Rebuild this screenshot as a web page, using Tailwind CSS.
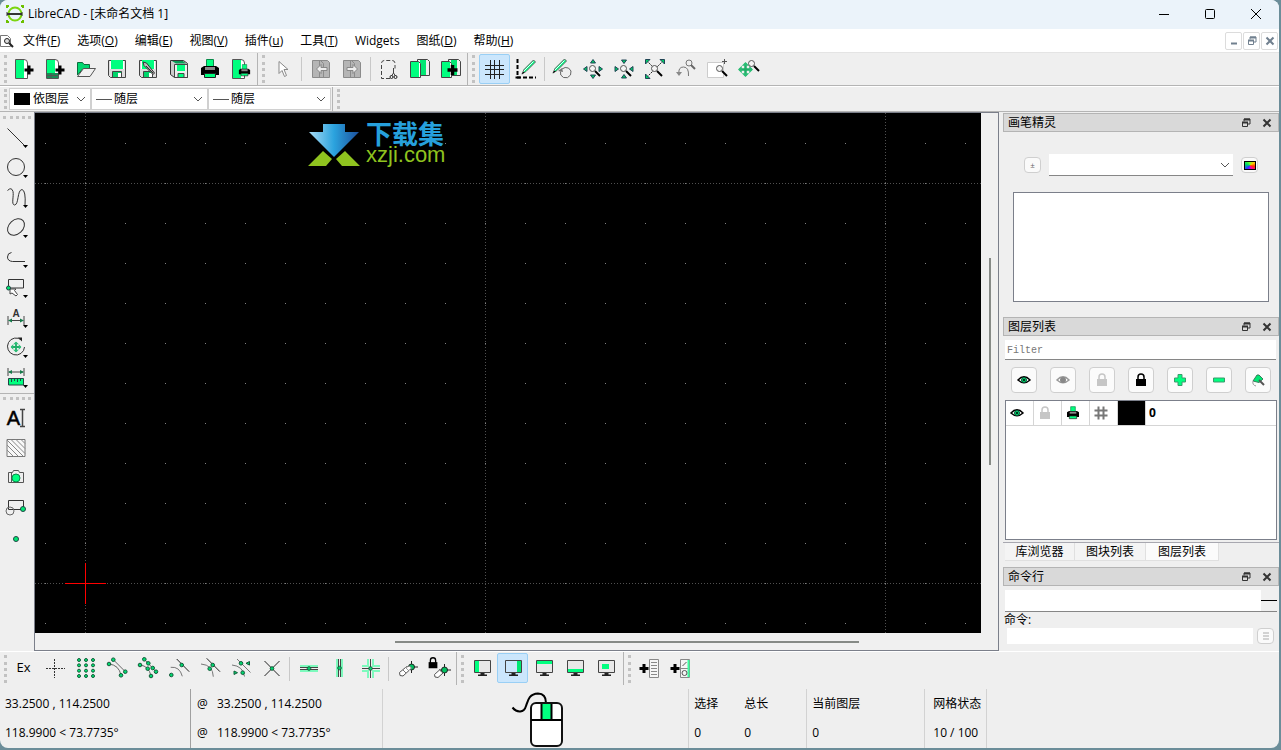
<!DOCTYPE html>
<html lang="zh">
<head>
    <meta charset="UTF-8">
    <meta name="viewport" content="width=device-width, initial-scale=1.0">
    <title>LibreCAD - [未命名文档 1]</title>
    <script src="https://cdn.jsdelivr.net/npm/@tailwindcss/browser@4"></script>
</head>
<body class="h-screen overflow-hidden bg-[#6b8d99] font-['Open_Sans','Noto_Sans_CJK_SC',sans-serif] text-xs text-black">

    <!-- 公用图标 -->
    <svg class="hidden" aria-hidden="true">
        <symbol id="page" viewBox="0 0 24 24"><path d="M3.500 2.500h8.500q3.500 0 3.500 3.500v15.500h-12z" fill="#fff" stroke="#555"/><path d="M4 3h8v18H4z" fill="#00ff7f"/></symbol>
        <symbol id="plus" viewBox="0 0 24 24"><path d="M17 8.500v9M12.500 13h9" stroke="#000" stroke-width="3"/></symbol>
        <symbol id="floppy" viewBox="0 0 24 24"><path d="M3.500 3.500h17v17h-15l-2-2z" fill="#ddd" stroke="#444"/><path d="M6 3h12v9H6z" fill="#00ff7f"/><path d="M5.500 4v8M18.500 4v8" fill="none" stroke="#fff"/><path d="M7.500 14.500h9v6h-9z" fill="#00d66b" stroke="#444"/><path d="M13 16h3v4h-3z" fill="#fff"/></symbol>
        <symbol id="printer" viewBox="0 0 24 24"><path d="M8.500 2.500h7v8h-7z" fill="#00ff7f" stroke="#0a8a4a"/><path d="M3 11l3-2h12l3 2v7H3z" fill="#000"/><path d="M7 10h10v3H7z" fill="#888"/><path d="M6.500 16.500h11v4h-11z" fill="#00ff7f" stroke="#222"/></symbol>
        <symbol id="mag" viewBox="0 0 24 24"><path d="M14 14l5 5" stroke="#000" stroke-width="2"/><circle cx="11.500" cy="11.500" r="3" fill="#f4f4f4" stroke="#555"/></symbol>
        <symbol id="eye" viewBox="0 0 16 16"><path d="M2 8q6-6.500 12 0q-6 5.500-12 0z" fill="#fff" stroke="currentColor" stroke-width="1.500"/></symbol>
        <symbol id="lock" viewBox="0 0 16 16"><path d="M5 8V5q0-3 3-3t3 3v3" fill="none" stroke="currentColor" stroke-width="1.500"/><path d="M3 7h10v7H3z" fill="currentColor"/></symbol>
        <symbol id="float" viewBox="0 0 10 10"><path d="M3 3.500V1h6v5H7" fill="none" stroke="currentColor"/><path d="M3 1.500h6" stroke="currentColor" stroke-width="2"/><path d="M1.500 4.500h5v4h-5z" fill="none" stroke="currentColor"/><path d="M1 4.500h6" stroke="currentColor" stroke-width="2"/></symbol>
        <symbol id="cross" viewBox="0 0 10 10"><path d="M1.500 1.500l7 7M8.500 1.500l-7 7" stroke="currentColor" stroke-width="2"/></symbol>
        <symbol id="chev" viewBox="0 0 10 10"><path d="M1 3l4 4 4-4" fill="none" stroke="#555"/></symbol>
        <symbol id="drop" viewBox="0 0 24 24"><path d="M19 20h5l-2.500 3z" fill="#000"/></symbol>
        <symbol id="screen" viewBox="0 0 24 24"><path d="M4.500 4.500h16v12h-16z" fill="#e8e8e8" stroke="#444"/><path d="M10.500 17h4v2h-4zM8 18.500h9v1.500H8z" fill="#222"/></symbol>
        <symbol id="move" viewBox="0 0 12 12"><path d="M6 1v10M1 6h10" stroke="#1fae68" stroke-width="2"/><path d="M6 0l3 3H3zM6 12l3-3H3zM0 6l3-3v6zM12 6L9 3v6z" fill="#2bbd75"/></symbol>
        <symbol id="pencil" viewBox="0 0 24 24"><path d="M7 18l2-4.500L18.500 4l2 2L11 15.500z" fill="#00ff7f" stroke="#666"/><path d="M8.500 15.500L18.500 5.500" stroke="#dff" /><path d="M6.500 18.500l2-3 1 1z" fill="#000"/></symbol>
    </svg>

    <div class="mr-0.5 flex h-[calc(100vh-2px)] flex-col overflow-hidden rounded-lg bg-[#efefef]">

        <!-- 标题栏 -->
        <header class="flex h-[29px] shrink-0 items-center bg-[#ebf3fa] pb-0.5 pl-1.5">
            <svg class="mr-1 size-[18px]" viewBox="0 0 18 18"><circle cx="9" cy="9" r="6.500" fill="none" stroke="#7bd510" stroke-width="2"/><path d="M1 3V1h2M15 1h2v2M17 15v2h-2M3 17H1v-2" fill="none" stroke="#6cc000" stroke-width="2"/><path d="M1 9h15" stroke="#333" stroke-width="2"/><path d="M1 7v4M16 7v4" stroke="#333"/></svg>
            <h1 class="flex-1 text-xs">LibreCAD - [未命名文档 1]</h1>
            <button aria-label="最小化" class="grid h-full w-[46px] place-items-center"><svg class="size-3" viewBox="0 0 12 12"><path d="M1 6.500h10" stroke="#000"/></svg></button>
            <button aria-label="最大化" class="grid h-full w-[46px] place-items-center"><svg class="size-3" viewBox="0 0 12 12"><rect x="1.500" y="1.500" width="9" height="9" rx="1" fill="none" stroke="#000"/></svg></button>
            <button aria-label="关闭" class="grid h-full w-[46px] place-items-center"><svg class="size-3" viewBox="0 0 12 12"><path d="M1 1l10 10M11 1L1 11" stroke="#000"/></svg></button>
        </header>

        <!-- 菜单栏 -->
        <nav class="flex h-6 shrink-0 items-center gap-[17px] border-b border-[#e4e4e4] bg-white">
            <svg class="-mr-2 size-3.5" viewBox="0 0 14 14"><path d="M.5 1.500h7l3 3v8H.5z" fill="#fff" stroke="#777"/><circle cx="7" cy="7" r="2.500" fill="#ddd" stroke="#222"/><path d="M9 9l4 4" stroke="#222" stroke-width="2"/></svg>
            <button>文件(<u>F</u>)</button>
            <button>选项(<u>O</u>)</button>
            <button>编辑(<u>E</u>)</button>
            <button>视图(<u>V</u>)</button>
            <button>插件(<u>u</u>)</button>
            <button>工具(<u>T</u>)</button>
            <button>Widgets</button>
            <button>图纸(<u>D</u>)</button>
            <button>帮助(<u>H</u>)</button>
            <div class="mr-px ml-auto flex gap-px text-[#71808f]">
                <button aria-label="最小化文档" class="grid h-[18px] w-[17px] place-items-center rounded-xs border border-[#dcdcdc]"><svg class="size-2.5" viewBox="0 0 10 10"><path d="M2 7.500h6" stroke="currentColor" stroke-width="2"/></svg></button>
                <button aria-label="还原文档" class="grid h-[18px] w-[17px] place-items-center rounded-xs border border-[#dcdcdc]"><svg class="size-2.5"><use href="#float"/></svg></button>
                <button aria-label="关闭文档" class="grid h-[18px] w-[17px] place-items-center rounded-xs border border-[#dcdcdc]"><svg class="size-2.5"><use href="#cross"/></svg></button>
            </div>
        </nav>

        <!-- 主工具栏 -->
        <div class="flex h-[33px] shrink-0 items-center border-b border-[#b4b4b4] [&>button]:grid [&>button]:h-[30px] [&>button]:w-[31px] [&>button]:shrink-0 [&>button]:place-items-center [&_button>svg]:size-6">
            <span class="mr-px ml-1 h-7 border-l-3 border-dotted border-[#c2c2c2]"></span>
            <button aria-label="新建"><svg><use href="#page"/><use href="#plus"/></svg></button>
            <button aria-label="从模板新建"><svg><use href="#page"/><path d="M4 16h11v5H4z" fill="#1b8a55"/><path d="M4 18.500h11M8 16v5" stroke="#555"/><use href="#plus"/></svg></button>
            <button aria-label="打开"><svg><path d="M3.500 18V5.500h5l1.500 2h5.500v4H9z" fill="#00d870" stroke="#0a6d3d"/><path d="M3.500 19.500l6-8h12l-5.500 8z" fill="#f1f1f1" stroke="#555"/></svg></button>
            <button aria-label="保存"><svg><use href="#floppy"/></svg></button>
            <button aria-label="另存为"><svg><use href="#floppy"/><path d="M7 5l3.500 1 8 10-1.500 1.500-9-9z" fill="#bbb" stroke="#333"/><path d="M10 9l7 7" stroke="#333"/></svg></button>
            <button aria-label="全部保存"><svg><path d="M3.500 3.500h13l4 3v14h-13l-4-3z" fill="#ccc" stroke="#333"/><path d="M5 4h11l3 2.500H9z" fill="#079b55"/><path d="M7.500 7.500h13v13h-13z" fill="#eee" stroke="#444"/><path d="M10 8h8v6h-8z" fill="#00ff7f"/><path d="M11 16.500h6v4h-6z" fill="#00ff7f" stroke="#444"/></svg></button>
            <button aria-label="打印"><svg><use href="#printer"/></svg></button>
            <button aria-label="打印预览"><svg><use href="#page"/><use href="#printer" x="8" y="6" width="15" height="15"/></svg></button>
            <span class="ml-px h-full border-l border-[#b4b4b4]"></span>
            <span class="mr-0.5 ml-1 h-7 border-l-3 border-dotted border-[#c2c2c2]"></span>
            <button aria-label="选择"><svg><path d="M8 4.500v12l3-3 2.500 6 2-1-2.500-6h4z" fill="#fff" stroke="#888"/></svg></button>
            <span class="mx-[3px] h-6 border-l border-[#c8c8c8]"></span>
            <button aria-label="撤销" disabled><svg><path d="M8.500 3.500h10l2 2v15h-10v-17M3.500 3.500h8l3 3v14h-11z" fill="#b5b5b5" stroke="#8b8b8b"/><path d="M7.500 12l4.500-4.500v3h6v3h-6v3z" fill="#eee" stroke="#888"/></svg></button>
            <button aria-label="重做" disabled><svg><path d="M8.500 3.500h10l2 2v15h-10v-17M3.500 3.500h8l3 3v14h-11z" fill="#b5b5b5" stroke="#8b8b8b"/><path d="M17.500 12L13 7.500v3H7v3h6v3z" fill="#eee" stroke="#888"/></svg></button>
            <span class="mr-0.5 ml-[3px] h-6 border-l border-[#c8c8c8]"></span>
            <button aria-label="剪切"><svg><path d="M13 21.500H4.500v-15q0-3 3-3H15q3 0 3 3v5" fill="none" stroke="#444" stroke-dasharray="4 2"/><path d="M16.500 11v5l-2 3M16.500 16l2 3" fill="none" stroke="#444"/><circle cx="14.500" cy="20" r="1.500" fill="none" stroke="#222"/><circle cx="18.500" cy="20" r="1.500" fill="none" stroke="#222"/></svg></button>
            <button aria-label="复制"><svg><path d="M9.500 2.500h10l2 2v14h-12z" fill="#eee" stroke="#444"/><path d="M12 3h6v15h-6z" fill="#00e873"/><path d="M2.500 4.500h8l2 2v14h-10z" fill="#fff" stroke="#444"/><path d="M3 5h8v15H3z" fill="#00ff7f"/></svg></button>
            <button aria-label="粘贴"><svg><path d="M9.500 2.500h10l2 2v14h-12z" fill="#eee" stroke="#444"/><path d="M12 3h6v15h-6z" fill="#00e873"/><path d="M2.500 4.500h8l2 2v14h-10z" fill="#fff" stroke="#444"/><path d="M3 5h8v15H3z" fill="#00ff7f"/><path d="M13.500 8v10M8.500 13h10" stroke="#000" stroke-width="3.500"/></svg></button>
            <span class="ml-px h-full border-l border-[#b4b4b4]"></span>
            <span class="mr-1 ml-1 h-7 border-l-3 border-dotted border-[#c2c2c2]"></span>
            <button aria-label="网格" class="rounded-xs border border-[#99cff5] bg-[#cbe6fc]"><svg><path d="M7.500 3v19M11.500 3v19M16.500 3v19M2 8.500h19M2 12.500h19M2 17.500h19" stroke="#222"/></svg></button>
            <button aria-label="草稿模式"><svg><path d="M3.500 2v18M3 20.500h19" stroke="#000" stroke-width="2" stroke-dasharray="4 2"/><path d="M1.500 20.500h5" stroke="#000" stroke-width="2"/><use href="#pencil" x="1" y="-1"/></svg></button>
            <span class="mr-px ml-[3px] h-6 border-l border-[#c8c8c8]"></span>
            <button aria-label="重绘"><svg><path d="M12 12q3-2.500 6.500-1q4 2.500 2 7q-2.500 4-7 2.500q-4-2-3-6" fill="none" stroke="#666"/><path d="M8 14l4-3 1 4z" fill="#777"/><use href="#pencil" x="-4" y="-2"/></svg></button>
            <button aria-label="放大"><svg><path d="M12 2.500l2.500 3.500h-5zM12 21.500l2.500-3.500h-5zM2.500 12l3.500-2.500v5zM21.500 12l-3.500-2.500v5z" fill="#00c868" stroke="#245"/><use href="#mag"/></svg></button>
            <button aria-label="缩小"><svg><path d="M12 6.500L9.500 3h5zM12 17.500l-2.500 3.500h5zM6.500 12L3 9.500v5zM17.500 12l3.500-2.500v5z" fill="#00c868" stroke="#245"/><use href="#mag"/></svg></button>
            <button aria-label="自动缩放"><svg><path d="M4 4l7 7M20 4L4 20" stroke="#222" stroke-dasharray="2 1"/><path d="M2.500 2.500H7L2.500 7zM21.500 2.500H17l4.500 4.500zM2.500 21.500V17L7 21.500z" fill="#00c868" stroke="#245"/><use href="#mag"/></svg></button>
            <button aria-label="上次视图"><svg><path d="M5 17q-1-7 4.500-7t5 9" fill="none" stroke="#777"/><path d="M2 15h6l-3 4z" fill="#888"/><circle cx="15" cy="6" r="3" fill="none" stroke="#777"/><path d="M17 8l4 4" stroke="#666" stroke-width="2"/></svg></button>
            <button aria-label="窗口缩放"><svg><path d="M2.500 5.500h16v15h-16z" fill="#fff" stroke="#ccc"/><path d="M19.500 2v5M17 4.500h5" stroke="#555"/><use href="#mag" x="3"/></svg></button>
            <button aria-label="平移缩放"><svg><use href="#move" x="2" y="5" width="15" height="15"/><use href="#mag" x="4" y="-5"/></svg></button>
        </div>

        <!-- 画笔属性栏 -->
        <div class="flex h-[26px] shrink-0 items-center border-t border-b border-t-white border-b-[#b4b4b4] [&_select]:min-w-0 [&_select]:flex-1 [&_select]:appearance-none [&_select]:outline-none [&>label]:flex [&>label]:h-[22px] [&>label]:items-center [&>label]:border [&>label]:border-[#d0d0d0] [&>label]:bg-white [&>label]:px-1">
            <span class="mr-0.5 ml-1 h-5 border-l-3 border-dotted border-[#c2c2c2]"></span>
            <label class="w-[82px]"><span class="mr-[3px] h-3 w-4 bg-black"></span><select aria-label="颜色"><option>依图层</option></select><svg class="size-2.5"><use href="#chev"/></svg></label>
            <label class="w-[117px]"><span class="mr-0.5 w-4 border-t border-[#555]"></span><select aria-label="线宽"><option>随层</option></select><svg class="size-2.5"><use href="#chev"/></svg></label>
            <label class="w-[123px]"><span class="mr-0.5 w-4 border-t border-[#555]"></span><select aria-label="线型"><option>随层</option></select><svg class="size-2.5"><use href="#chev"/></svg></label>
            <span class="ml-px h-full border-l border-[#b4b4b4]"></span>
            <span class="ml-1 h-5 border-l-3 border-dotted border-[#c2c2c2]"></span>
        </div>

        <div class="flex min-h-0 flex-1">
            <!-- 左侧绘图工具 -->
            <aside class="flex w-[34px] shrink-0 flex-col [&>button]:grid [&>button]:h-[30px] [&>button]:w-8 [&>button]:shrink-0 [&>button]:place-items-center [&_button>svg]:size-6">
                <span class="mt-1 mb-[3px] ml-[3px] w-7 border-t-3 border-dotted border-[#c2c2c2]"></span>
                <button aria-label="直线"><svg><path d="M3.500 3.500L21 21" stroke="#333"/><use href="#drop"/></svg></button>
                <button aria-label="圆"><svg><circle cx="12" cy="12" r="8.500" fill="none" stroke="#333"/><use href="#drop"/></svg></button>
                <button aria-label="曲线"><svg><path d="M3.500 5.500q4-4 5.500 1c1 5-2 13 1.500 13.500C15 20 13 5 18 4.500q4 1 3 16" fill="none" stroke="#333"/><use href="#drop"/></svg></button>
                <button aria-label="椭圆"><svg><ellipse cx="12" cy="12" rx="9.500" ry="7" transform="rotate(-42 12 12)" fill="none" stroke="#333"/><use href="#drop"/></svg></button>
                <button aria-label="多段线"><svg><path d="M7.500 7.500Q3.500 8 3.500 12t5 4.500H21" fill="none" stroke="#333"/><use href="#drop"/></svg></button>
                <button aria-label="选择工具"><svg><path d="M4.500 4.500h15v8.500h-15z" fill="none" stroke="#333"/><path d="M6 14v5l2-1 4 3 1.500-1.500-3-4 1.500-1.500z" fill="#fff" stroke="#444"/><circle cx="4.500" cy="13" r="2" fill="#00e873" stroke="#244"/><use href="#drop"/></svg></button>
                <button aria-label="标注"><svg class="overflow-visible"><path d="M4 11v9M20 11v9M5 15.500h14" stroke="#444"/><path d="M4 15.500l4-2v4zM20 15.500l-4-2v4z" fill="#157a4a"/><text x="12" y="12" text-anchor="middle" font-size="10" font-weight="700" font-family="Liberation Sans" fill="#333">A</text><use href="#drop"/></svg></button>
                <button aria-label="修改"><svg><path d="M17.500 5A8.500 8.500 0 1 0 20.500 12" fill="none" stroke="#333"/><path d="M14 2.500h4v4z" fill="#222"/><use href="#move" x="6.500" y="6.500" width="11" height="11"/><use href="#drop"/></svg></button>
                <button aria-label="测量"><svg><path d="M4 3v8M20 3v8M5 7h14" stroke="#444"/><path d="M4 7l4-2v4zM20 7l-4-2v4z" fill="#157a4a"/><path d="M4.500 13.500h15v6.500h-15z" fill="#00ff7f" stroke="#244"/><path d="M7.500 14v3M10.500 14v2M13.500 14v3M16.500 14v2" stroke="#244"/><use href="#drop"/></svg></button>
                <span class="mt-px w-full border-t border-[#b4b4b4]"></span>
                <span class="my-[3px] ml-[3px] w-7 border-t-3 border-dotted border-[#c2c2c2]"></span>
                <button aria-label="文字"><svg class="overflow-visible"><path d="M16 3.500h5M16 20.500h5M18.500 4v16" stroke="#444" stroke-width="1.500"/><text x="9.500" y="19" text-anchor="middle" font-size="20" font-family="Liberation Sans" stroke="#000" stroke-width=".5">A</text></svg></button>
                <button aria-label="填充"><svg><path d="M3 3.500h18v17H3z" fill="#f8f8f8" stroke="#777"/><path d="M3 14l6.500 6.500M3 9l11.500 11.500M3 4l16.500 16.500M7 3.500l14 14M12 3.500l9 9M17 3.500l4 4" stroke="#888"/></svg></button>
                <button aria-label="图片"><svg><path d="M4.500 6.500h4l1-2h5l1 2h4v10h-15zM7.500 6.500v10" fill="#eee" stroke="#555"/><circle cx="12" cy="12" r="4" fill="#00ff7f" stroke="#0a8a4a"/></svg></button>
                <button aria-label="图块"><svg><path d="M4.500 13.500v-9h15v9h-15" fill="none" stroke="#333"/><circle cx="6" cy="15" r="4" fill="none" stroke="#666"/><circle cx="19" cy="13" r="2.500" fill="#00e873" stroke="#244"/></svg></button>
                <button aria-label="点"><svg><circle cx="12" cy="13" r="2.500" fill="#00e873" stroke="#244"/></svg></button>
            </aside>

            <!-- 绘图区 -->
            <main class="flex min-w-0 flex-1 flex-col border border-[#7b7f8a] bg-[#f0f0f0]">
                <div class="flex min-h-0 flex-1">
                    <svg class="h-full min-w-0 flex-1 bg-black">
                        <defs>
                            <pattern id="dots" x="10" y="30" width="40" height="40" patternUnits="userSpaceOnUse"><rect width="1" height="1" fill="#808080"/></pattern>
                            <linearGradient id="arrow"><stop offset="0" stop-color="#a9dcf5"/><stop offset=".5" stop-color="#2ba3de"/><stop offset="1" stop-color="#1c4f9c"/></linearGradient>
                        </defs>
                        <rect width="100%" height="100%" fill="url(#dots)"/>
                        <g stroke="#505050" stroke-dasharray="1 2">
                            <line x1="50.500" x2="50.500" y2="100%"/><line x1="450.500" x2="450.500" y2="100%"/><line x1="850.500" x2="850.500" y2="100%"/>
                            <line x2="100%" y1="70.500" y2="70.500"/><line x2="100%" y1="470.500" y2="470.500"/>
                        </g>
                        <path d="M30 470.500h41M50.500 450v41" stroke="#f00"/>
                        <path d="M288 11h22v8h14l-25 25-25-25h14z" fill="url(#arrow)"/>
                        <path d="M273 53l15-15 9 8-6 7zM325 53l-15-15-9 8 6 7z" fill="#8fc31f"/>
                        <text x="331" y="31" font-size="26" font-weight="700" font-family="Noto Sans CJK SC" fill="#26a0dc">下载集</text>
                        <text x="331" y="49" font-size="22" font-family="Liberation Sans" fill="#8fc31f">xzji.com</text>
                    </svg>
                    <div class="w-[17px] shrink-0 pt-[145px] pl-2"><div class="h-[207px] w-0.5 bg-[#868a86]"></div></div>
                </div>
                <div class="h-[17px] shrink-0 pt-2 pl-[360px]"><div class="h-0.5 w-[464px] bg-[#868a86]"></div></div>
            </main>

            <!-- 右侧停靠面板 -->
            <aside class="ml-1 flex w-[276px] shrink-0 flex-col pt-px [&>h2]:flex [&>h2]:h-[19px] [&>h2]:shrink-0 [&>h2]:items-center [&>h2]:gap-[11px] [&>h2]:border [&>h2]:border-[#b4b4b4] [&>h2]:bg-[#d9d9d9] [&>h2]:px-1 [&>h2]:pr-1.5 [&_h2_svg]:block [&_h2_svg]:size-2.5 [&_h2_svg]:text-[#333]">
                <h2><span class="flex-1">画笔精灵</span><button aria-label="浮动画笔精灵"><svg><use href="#float"/></svg></button><button aria-label="关闭画笔精灵"><svg><use href="#cross"/></svg></button></h2>
                <div class="mt-[22px] mr-[21px] ml-[21px] flex items-center gap-2">
                    <button class="h-4 w-[17px] rounded-sm border border-[#cfcfcf] bg-[#fafafa] text-[8px] leading-none text-[#666]">±</button>
                    <label class="flex h-[22px] flex-1 items-center border-b border-[#868686] bg-white px-[3px]"><select aria-label="画笔颜色" class="min-w-0 flex-1 appearance-none outline-none"><option></option></select><svg class="size-2.5"><use href="#chev"/></svg></label>
                    <button aria-label="选择颜色" class="grid h-4 w-[17px] place-items-center rounded-sm border border-[#cfcfcf] bg-[#fafafa]"><span class="block h-[9px] w-3 border border-black bg-[conic-gradient(#80ff20,#ffc000_60deg,#ff3000_100deg,#ff00a0_150deg,#a000ff_190deg,#2040ff_230deg,#00e060_290deg,#80ff20)]"></span></button>
                </div>
                <ul class="mt-4 mr-2.5 ml-2.5 h-[110px] border border-[#7b7f8a] bg-white"></ul>

                <h2 class="mt-[15px]"><span class="flex-1">图层列表</span><button aria-label="浮动图层列表"><svg><use href="#float"/></svg></button><button aria-label="关闭图层列表"><svg><use href="#cross"/></svg></button></h2>
                <input type="text" aria-label="Filter" placeholder="Filter" class="mr-[3px] ml-0.5 mt-1 h-5 shrink-0 border-b border-[#868686] bg-white px-0.5 pt-0.5 font-['Liberation_Mono',monospace] text-[10px] outline-none placeholder:text-[#777]">
                <div class="mt-[7px] mr-2 ml-2 flex shrink-0 justify-between [&>button]:grid [&>button]:size-[26px] [&>button]:place-items-center [&>button]:rounded-sm [&>button]:border [&>button]:border-[#cfcfcf] [&>button]:bg-[#fbfbfb] [&_svg]:size-4">
                    <button aria-label="显示全部"><svg><use href="#eye"/><circle cx="8" cy="8" r="2.500" fill="#00d870" stroke="#053"/><circle cx="8" cy="8" r="1"/></svg></button>
                    <button aria-label="隐藏全部" class="text-[#999]"><svg><use href="#eye"/><circle cx="8" cy="8" r="3" fill="#888"/></svg></button>
                    <button aria-label="解锁全部" class="text-[#c6c6c6]"><svg><use href="#lock"/></svg></button>
                    <button aria-label="锁定全部"><svg><use href="#lock"/></svg></button>
                    <button aria-label="添加图层"><svg><path d="M6 2.500h4V6h3.500v4H10v3.500H6V10H2.500V6H6z" fill="#00ff7f" stroke="#3b9a6c"/></svg></button>
                    <button aria-label="删除图层"><svg><path d="M2.500 6h11v4h-11z" fill="#00ff7f" stroke="#3b9a6c"/></svg></button>
                    <button aria-label="编辑图层"><svg><path d="M3 9l4-6 2 0 4 4-4 3.500z" fill="#00e873" stroke="#3b7a5c"/><path d="M3 9q-1 4 3 5" fill="none" stroke="#999"/><path d="M9 8l5 5" stroke="#555" stroke-width="2"/></svg></button>
                </div>
                <div class="mt-[7px] mr-0.5 ml-0.5 h-[140px] shrink-0 border border-[#7b7f8a] bg-white">
                    <table class="w-full border-separate border-spacing-0 border-b border-[#d5d5d5] [&_svg]:ml-[3px] [&_svg]:size-4 [&_td]:h-6 [&_td]:w-7 [&_td]:border-r [&_td]:border-[#d5d5d5] [&_td]:p-0">
                        <tr>
                            <td><svg><use href="#eye"/><circle cx="8" cy="8" r="2.500" fill="#00d870" stroke="#053"/><circle cx="8" cy="8" r="1"/></svg></td>
                            <td class="text-[#c6c6c6]"><svg><use href="#lock"/></svg></td>
                            <td><svg><use href="#printer"/></svg></td>
                            <td><svg><path d="M5.500 1.500v13M10.500 1.500v13M1.500 5.500h13M1.500 10.500h13" stroke="#777" stroke-width="2"/></svg></td>
                            <td class="bg-black"></td>
                            <th class="p-0 pl-[3px] text-left font-bold">0</th>
                        </tr>
                    </table>
                </div>
                <div class="mt-0.5 flex h-5 shrink-0 items-start border-t border-[#a8a8b0] pl-0.5 [&>button]:h-[18px] [&>button]:border-r [&>button]:border-b [&>button]:border-[#e0e0e0] [&>button]:bg-[#f4f4f4]">
                    <button class="w-[70px]">库浏览器</button>
                    <button class="w-[71px]">图块列表</button>
                    <button class="w-[73px] bg-[#fbfbfb]!">图层列表</button>
                </div>

                <h2 class="mt-[5px]"><span class="flex-1">命令行</span><button aria-label="浮动命令行"><svg><use href="#float"/></svg></button><button aria-label="关闭命令行"><svg><use href="#cross"/></svg></button></h2>
                <div class="mt-1 mr-0.5 ml-0.5 flex h-[22px] shrink-0 items-center border-b border-[#868686] bg-white"><span class="ml-auto flex h-full w-4 items-center bg-[#f0f0f0]"><span class="w-full border-t border-black"></span></span></div>
                <label for="cmd" class="ml-px leading-4">命令:</label>
                <div class="mr-[5px] ml-1 flex items-center gap-1">
                    <input id="cmd" type="text" class="h-4 min-w-0 flex-1 bg-white px-1 outline-none">
                    <button aria-label="命令选项" class="grid h-4 w-[17px] place-items-center rounded-sm border border-[#cfcfcf] bg-[#fafafa]"><svg class="size-2" viewBox="0 0 8 8"><path d="M1 1h6M1 4h6M1 7h6" stroke="#aaa"/></svg></button>
                </div>
            </aside>
        </div>

        <!-- 捕捉工具栏 -->
        <div class="flex h-[34px] shrink-0 items-center border-t border-white [&>button]:mb-0.5 [&>button]:grid [&>button]:h-[30px] [&>button]:w-[31px] [&>button]:shrink-0 [&>button]:place-items-center [&_button>svg]:size-6">
            <span class="mr-px ml-1 h-7 border-l-3 border-dotted border-[#c2c2c2]"></span>
            <button class="text-[13px]">Ex</button>
            <button aria-label="自由捕捉"><svg><path d="M11.500 3v19M3 12.500h19" stroke="#333" stroke-dasharray="2 1"/></svg></button>
            <button aria-label="捕捉网格"><svg fill="#00e873" stroke="#135c3a"><circle cx="5" cy="4" r="1.500"/><circle cx="12" cy="4" r="1.500"/><circle cx="19" cy="4" r="1.500"/><circle cx="5" cy="9.300" r="1.500"/><circle cx="12" cy="9.300" r="1.500"/><circle cx="19" cy="9.300" r="1.500"/><circle cx="5" cy="14.700" r="1.500"/><circle cx="12" cy="14.700" r="1.500"/><circle cx="19" cy="14.700" r="1.500"/><circle cx="5" cy="20" r="1.500"/><circle cx="12" cy="20" r="1.500"/><circle cx="19" cy="20" r="1.500"/></svg></button>
            <button aria-label="捕捉端点"><svg><path d="M8.300 3.700l12 12M4 8q10 1 12 11.300" fill="none" stroke="#666"/><g fill="#00d870" stroke="#135c3a"><circle cx="8.300" cy="3.700" r="1.800"/><circle cx="4" cy="8" r="1.800"/><circle cx="20.300" cy="15.700" r="1.800"/><circle cx="16" cy="19.300" r="1.800"/></g></svg></button>
            <button aria-label="捕捉实体"><svg><path d="M8.300 3.300L20 15.700M4 9q9 1 11 11" fill="none" stroke="#666"/><g fill="#00d870" stroke="#135c3a"><circle cx="8.300" cy="3.300" r="1.800"/><circle cx="4" cy="9" r="1.800"/><circle cx="12.300" cy="7.300" r="1.800"/><circle cx="11.700" cy="12.700" r="1.800"/><circle cx="16.700" cy="12" r="1.800"/><circle cx="20" cy="15.700" r="1.800"/><circle cx="15" cy="20" r="1.800"/></g></svg></button>
            <button aria-label="捕捉中心"><svg><path d="M9.700 3l12.500 12.700" stroke="#222"/><path d="M3.700 11.300q9-1 11.600 9" fill="none" stroke="#777"/><g fill="#00d870" stroke="#135c3a"><circle cx="4.300" cy="19" r="1.800"/><circle cx="14.700" cy="9" r="1.800"/></g></svg></button>
            <button aria-label="捕捉中点"><svg><path d="M8.700 2.300L22 15.700" stroke="#222"/><path d="M3 8q12 1 12.300 12.700" fill="none" stroke="#777"/><g fill="#00d870" stroke="#135c3a"><circle cx="14.700" cy="9" r="1.800"/><circle cx="11.700" cy="12.700" r="1.800"/></g></svg></button>
            <button aria-label="捕捉距离"><svg><path d="M8 3l13.500 13.500M3 9q11 1 12.500 11.500" fill="none" stroke="#777"/><g fill="#00d870" stroke="#135c3a"><circle cx="12" cy="7.300" r="1.800"/><circle cx="13.700" cy="16.700" r="1.800"/><path d="M17 7.300l3.500-1.800v3.600zM8.500 16.700L5 15v3.500z"/></g></svg></button>
            <button aria-label="捕捉交点"><svg><path d="M4.500 5l15 15M19.500 5l-15 15" stroke="#222"/><circle cx="12" cy="12.500" r="1.800" fill="#00d870" stroke="#135c3a"/></svg></button>
            <span class="mr-[3px] ml-0.5 h-6 border-l border-[#c8c8c8]"></span>
            <button aria-label="限制水平"><svg><path d="M3 10h18M3 15h18" stroke="#7dfabd" stroke-width="2"/><path d="M3 11.500h18M3 13.500h18" stroke="#444"/><circle cx="12" cy="12.500" r="1.800" fill="#00d870" stroke="#135c3a"/></svg></button>
            <button aria-label="限制垂直"><svg><path d="M9 3v18M14 3v18" stroke="#7dfabd" stroke-width="2"/><path d="M10.500 3v18M12.500 3v18" stroke="#444"/><circle cx="11.500" cy="12" r="1.800" fill="#00d870" stroke="#135c3a"/></svg></button>
            <button aria-label="限制正交"><svg><path d="M9 3v7H3M14 3v7h7M9 22v-7H3M14 22v-7h7" fill="none" stroke="#7dfabd" stroke-width="2"/><path d="M11.500 3v19M3 12.500h18" stroke="#444"/><circle cx="11.500" cy="12.500" r="1.800" fill="#00d870" stroke="#135c3a"/></svg></button>
            <span class="mr-[3px] ml-0.5 h-6 border-l border-[#c8c8c8]"></span>
            <button aria-label="设置相对零点"><svg><path d="M15.500 5v12M10 11h12" stroke="#222"/><circle cx="15.500" cy="11" r="3" fill="#00c060" stroke="#222"/><path d="M3.500 16.500l6-5 3.500 3-6 5.500-3-.5z" fill="#fff" stroke="#555"/><path d="M9.500 11.500l4-1.500 2 2-2.500 2.500M7 14l3 3" fill="#fff" stroke="#777"/></svg></button>
            <button aria-label="锁定相对零点"><svg><use href="#lock" x="-1" width="14" height="14"/><path d="M17.500 8v12M12 14h12" stroke="#222"/><circle cx="17.500" cy="14" r="3" fill="#00c060" stroke="#222"/><path d="M7.500 18.500l5-4.500 3.500 3-5 4.500-3-.5z" fill="#fff" stroke="#555"/></svg></button>
            <span class="ml-0.5 h-full border-l border-[#b4b4b4]"></span>
            <span class="mr-0.5 ml-1 h-7 border-l-3 border-dotted border-[#c2c2c2]"></span>
            <button aria-label="左侧停靠区"><svg><use href="#screen"/><path d="M5 5h4v11H5z" fill="#00ff7f"/></svg></button>
            <button aria-label="右侧停靠区" class="rounded-xs border border-[#99cff5] bg-[#cbe6fc]"><svg><use href="#screen"/><path d="M5 5h11v11H5z" fill="#cbe6fc"/><path d="M16 5h4v11h-4z" fill="#00e873"/></svg></button>
            <button aria-label="顶部停靠区"><svg><use href="#screen"/><path d="M5 5h15v3H5z" fill="#00ff7f"/></svg></button>
            <button aria-label="底部停靠区"><svg><use href="#screen"/><path d="M5 13h15v3H5z" fill="#00ff7f"/></svg></button>
            <button aria-label="浮动停靠区"><svg><use href="#screen"/><path d="M8 8h7v5H8z" fill="#00ff7f"/></svg></button>
            <span class="ml-0.5 h-full border-l border-[#b4b4b4]"></span>
            <span class="mr-0.5 ml-1 h-7 border-l-3 border-dotted border-[#c2c2c2]"></span>
            <button aria-label="菜单创建"><svg><path d="M7 8v9M2.500 12.500h9" stroke="#000" stroke-width="3"/><path d="M12.500 3.500h9v18h-9z" fill="#f5f5f5" stroke="#888"/><path d="M14 6.500h6M14 9.500h6M14 12.500h6M14 15.500h6M14 18.500h6" stroke="#888"/></svg></button>
            <button aria-label="工具栏创建"><svg><path d="M7 8v9M2.500 12.500h9" stroke="#000" stroke-width="3"/><path d="M12.500 3.500h9v18h-9zM12.500 12.500h9" fill="#f5f5f5" stroke="#888"/><path d="M20.500 4v17" stroke="#3dffa0" stroke-width="2"/><path d="M14.500 10l4-4" stroke="#555"/><circle cx="16.500" cy="17" r="2.500" fill="none" stroke="#555"/></svg></button>
        </div>

        <!-- 状态栏 -->
        <footer class="grid h-[63px] shrink-0 grid-cols-[191px_192px_21fr_118px_118px_62px_20fr] pt-1 [&_p]:h-[29px] [&_p]:leading-[29px] [&_p]:whitespace-pre [&>div]:border-r [&>div]:border-[#d2d2d2]">
            <div class="border-[#a0a0a0]! pl-[5px]"><p>33.2500 , 114.2500</p><p>118.9900 &lt; 73.7735°</p></div>
            <div class="grid grid-cols-[20px_1fr] content-start pl-1.5"><p>@</p><p>33.2500 , 114.2500</p><p>@</p><p>118.9900 &lt; 73.7735°</p></div>
            <div class="flex justify-center pt-[3px] pl-1">
                <svg class="h-14 w-[54px]" viewBox="0 0 54 56"><path d="M35 11C35 3 31 1.500 27 1.500C18 2 17 8 15 14C13 21 6 21 1.500 15.500" fill="none" stroke="#000" stroke-width="2"/><rect x="20" y="11" width="31" height="43" rx="5" fill="#fff" stroke="#111" stroke-width="2"/><path d="M30 12h10v16H30z" fill="#00ff7f"/><path d="M30.500 12v16M40.500 12v16M20 28h31" stroke="#000" stroke-width="2"/></svg>
            </div>
            <div class="grid grid-cols-[50px_1fr] content-start pl-[5px]"><p>选择</p><p>总长</p><p>0</p><p>0</p></div>
            <div class="pl-[5px]"><p>当前图层</p><p>0</p></div>
            <div class="pl-2"><p>网格状态</p><p>10 / 100</p></div>
        </footer>
    </div>
</body>
</html>
